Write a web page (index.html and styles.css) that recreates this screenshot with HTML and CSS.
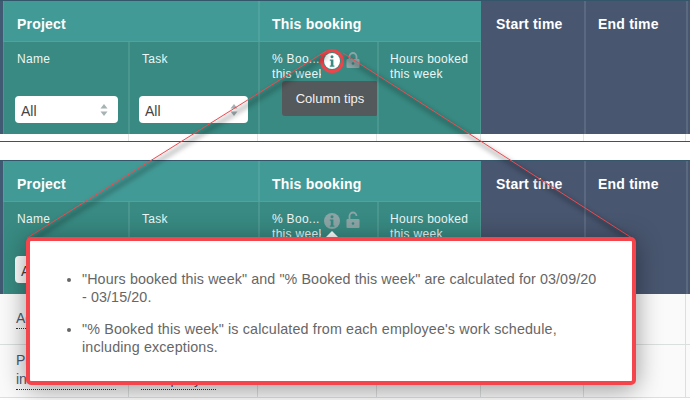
FILE: index.html
```html
<!DOCTYPE html>
<html lang="en">
<head>
    <meta charset="UTF-8">
    <meta name="viewport" content="width=device-width, initial-scale=1.0">
    <title>Column tips</title>
    <link rel="stylesheet" href="styles.css">
</head>
<body>
    <div class="shot shot-top">
        <div class="head">
            <div class="group project">Project</div>
            <div class="group booking">This booking</div>
            <div class="slate start">Start time</div>
            <div class="slate end">End time</div>
            <div class="slate tail"></div>
            <div class="sub sub-name">
                <div class="sub-label">Name</div>
                <div class="select"><span>All</span><svg class="arrows" viewBox="0 0 8 14"><path d="M4 1L7.500 5.500H.5zM4 13L.5 8.500h7z"/></svg></div>
            </div>
            <div class="sub">
                <div class="sub-label">Task</div>
                <div class="select"><span>All</span><svg class="arrows" viewBox="0 0 8 14"><path d="M4 1L7.500 5.500H.5zM4 13L.5 8.500h7z"/></svg></div>
            </div>
            <div class="sub sub-booked">
                <div class="booked-row">
                    <div class="cut-label">% Boo...<br>this week</div>
                    <svg class="icon-info" viewBox="0 0 16 16">
                        <circle class="ring" cx="8" cy="8" r="10.500"/>
                        <circle class="disc-white" cx="8" cy="8" r="8"/>
                        <circle class="dot-teal" cx="8" cy="3.800" r="1.500"/>
                        <path class="dot-teal" d="M5.800 6.500h3.600v6h1v1.300H5.800v-1.300h1v-4.700h-1z"/>
                    </svg>
                    <svg class="icon-lock" viewBox="0 0 14 16">
                        <path class="lock-arc" d="M3.500 8V4.500a3.500 3.500 0 0 1 7 0V8"/>
                        <rect class="lock-body" x="0.500" y="7" width="13" height="9" rx="1"/>
                        <circle class="lock-hole" cx="7" cy="11.500" r="1.300"/>
                    </svg>
                </div>
                <div class="tooltip">Column tips</div>
            </div>
            <div class="sub sub-hours">
                <div class="sub-label">Hours booked<br>this week</div>
            </div>
        </div>
        <div class="spacer-row">
            <div></div><div></div><div></div><div></div><div></div><div></div>
        </div>
    </div>

    <div class="shot shot-bottom">
        <div class="head">
            <div class="group project">Project</div>
            <div class="group booking">This booking</div>
            <div class="slate start">Start time</div>
            <div class="slate end">End time</div>
            <div class="slate tail"></div>
            <div class="sub sub-name">
                <div class="sub-label">Name</div>
                <div class="select"><span>All</span></div>
            </div>
            <div class="sub">
                <div class="sub-label">Task</div>
                <div class="select"><span>All</span></div>
            </div>
            <div class="sub sub-booked">
                <div class="booked-row">
                    <div class="cut-label">% Boo...<br>this week</div>
                    <svg class="icon-info" viewBox="0 0 16 16">
                        <circle class="disc-grey" cx="8" cy="8" r="8"/>
                        <circle class="dot-teal" cx="8" cy="3.800" r="1.500"/>
                        <path class="dot-teal" d="M5.800 6.500h3.600v6h1v1.300H5.800v-1.300h1v-4.700h-1z"/>
                    </svg>
                    <svg class="icon-lock" viewBox="0 0 14 16">
                        <path class="lock-arc" d="M3.500 8V4a3.500 3.500 0 0 1 7 0"/>
                        <rect class="lock-body" x="0.500" y="7" width="13" height="9" rx="1"/>
                        <circle class="lock-hole" cx="7" cy="11.500" r="1.300"/>
                    </svg>
                </div>
                <div class="caret"></div>
            </div>
            <div class="sub sub-hours">
                <div class="sub-label">Hours booked<br>this week</div>
            </div>
        </div>
        <div class="rows">
            <div class="row row-one">
                <div><span class="dotted">Admin</span></div><div></div><div></div><div></div><div></div><div></div>
            </div>
            <div class="row row-two">
                <div><span class="dotted">Project<br>internal work</span></div><div><span class="dotted">Company</span></div><div></div><div></div><div></div><div></div>
            </div>
        </div>
    </div>

    <!-- zoom lines from the icon to the callout -->
    <svg class="zoom-lines" viewBox="0 0 690 400">
        <path class="line-shadow" d="M326 51L27 238M343 53L632 238"/>
        <path class="line-red" d="M326 51L27 238M343 53L632 238"/>
    </svg>

    <div class="callout">
        <ul>
            <li>"Hours booked this week" and "% Booked this week" are calculated for 03/09/20 - 03/15/20.</li>
            <li>"% Booked this week" is calculated from each employee's work schedule, including exceptions.</li>
        </ul>
    </div>
</body>
</html>
```

FILE: styles.css
```css
body {
    margin: 0;
    background-color: #fff;
    font-family: "Liberation Sans", Arial, sans-serif;
    width: 690px;
    height: 400px;
    overflow: hidden;
    position: relative;
}
.shot {
    overflow: hidden;
    background-color: #fff;
}
.shot-top {
    height: 140px;
    border-top: 1px solid #34566a;
    border-bottom: 1px solid #34566a;
    margin-bottom: 18px;
}
.shot-bottom {
    height: 239px;
    border-top: 1px solid #34566a;
    border-bottom: 1px solid #34566a;
}
.head {
    display: grid;
    grid-template-columns: 125px 130px 119px 104px 103px 102px 4px;
    grid-template-rows: 41px 92px;
    background-color: #4a5a72;
    border-left: 3px solid #3f5a72;
    color: #fff;
}
.group, .slate {
    font-size: 14px;
    font-weight: bold;
    letter-spacing: 0.2px;
    line-height: 46px;
    padding-left: 12px;
}
.group {
    background-color: #429a96;
    border-bottom: 1px solid #4ea39f;
    border-left: 2px solid #4ea39f;
    height: 40px;
}
.project {
    grid-column: 1 / 3;
    border-left-width: 1px;
    padding-left: 13px;
}
.booking {
    grid-column: 3 / 5;
}
.slate {
    grid-row: 1 / 3;
    background-color: #48566f;
    border-left: 2px solid #5a6880;
}
.start {
    grid-column: 5;
    border-left: 0;
    padding-left: 15px;
}
.end {
    grid-column: 6;
}
.tail {
    grid-column: 7;
    padding: 0;
}
.sub {
    grid-row: 2;
    position: relative;
    background-color: #388a82;
    border-left: 2px solid #4a9790;
    padding: 10px 0 0 12px;
    font-size: 12px;
    line-height: 15px;
    letter-spacing: 0.3px;
    color: #eef6f5;
}
.sub-name {
    border-left-width: 1px;
    padding-left: 13px;
}
.sub-hours {
    border-right: 1px solid #4a9790;
    padding-left: 11px;
}
.select {
    position: absolute;
    left: 9px;
    right: 10px;
    top: 54px;
    height: 27px;
    background-color: #fff;
    border-radius: 4px;
    font-size: 14px;
    line-height: 31px;
    letter-spacing: 0;
    color: #444;
    padding-left: 6px;
}
.sub-name .select {
    left: 11px;
}
.arrows {
    position: absolute;
    right: 10px;
    top: 7px;
    width: 8px;
    height: 14px;
    fill: #a6b2b4;
}
.booked-row {
    display: flex;
    align-items: flex-start;
}
.cut-label {
    width: 49px;
    overflow: hidden;
    white-space: nowrap;
    flex: none;
}
.icon-info {
    flex: none;
    width: 16px;
    height: 16px;
    margin: 1px 0 0 3px;
    overflow: visible;
}
.ring {
    fill: none;
    stroke: #f0434a;
    stroke-width: 3;
}
.disc-white {
    fill: #fff;
}
.disc-grey {
    fill: #8da5a6;
}
.dot-teal {
    fill: #388a82;
}
.icon-lock {
    flex: none;
    width: 14px;
    height: 16px;
    margin: 0 0 0 6px;
    overflow: visible;
}
.lock-arc {
    fill: none;
    stroke: #8da5a6;
    stroke-width: 1.800;
}
.lock-body {
    fill: #8da5a6;
}
.lock-hole {
    fill: #388a82;
}
.tooltip {
    position: absolute;
    left: 22px;
    top: 39px;
    width: 96px;
    height: 35px;
    border-radius: 3px;
    background-color: #54595b;
    color: #f2f2f2;
    font-size: 13px;
    line-height: 35px;
    letter-spacing: 0;
    text-align: center;
}
.caret {
    position: absolute;
    left: 66px;
    top: 29px;
    border-left: 6px solid transparent;
    border-right: 6px solid transparent;
    border-bottom: 6px solid #fff;
}
.spacer-row, .row {
    display: grid;
    grid-template-columns: 129px 129px 119px 104px 103px 102px 4px;
}
.spacer-row {
    height: 7px;
}
.spacer-row div {
    border-right: 1px solid #e4e6e6;
}
.rows {
    background-color: #fafafa;
}
.row {
    border-bottom: 1px solid #dcdfdf;
    font-size: 14px;
    line-height: 19px;
    color: #4b5a72;
}
.row div {
    border-right: 1px solid #dcdfdf;
    padding-left: 16px;
}
.row-one {
    height: 50px;
}
.row-two {
    height: 52px;
}
.dotted {
    display: inline-block;
    border-bottom: 1px dotted #333;
    margin-top: 15px;
}
.row-two .dotted {
    width: 100px;
    margin-top: 6px;
}
.row-two div:nth-child(2) .dotted {
    width: 75px;
    margin-top: 25px;
    margin-left: -4px;
}
.zoom-lines {
    position: absolute;
    left: 0;
    top: 0;
    width: 690px;
    height: 400px;
}
.line-red {
    fill: none;
    stroke: #f04a50;
    stroke-width: 1;
}
.line-shadow {
    fill: none;
    stroke: rgba(0, 0, 0, 0.35);
    stroke-width: 3;
    transform: translate(2px, 4px);
    filter: blur(2.500px);
}
.callout {
    position: absolute;
    left: 26px;
    top: 237px;
    width: 602px;
    height: 140px;
    border: 4px solid #f4444c;
    border-radius: 5px;
    background-color: #fff;
    box-shadow: 0 4px 26px rgba(0, 0, 0, 0.4);
    color: #666;
    font-size: 14.300px;
    line-height: 18px;
    letter-spacing: 0.1px;
}
.callout ul {
    margin: 29px 0 0;
    padding: 0 33px 0 52px;
}
.callout li {
    margin-bottom: 14px;
}
.callout li + li {
    letter-spacing: 0.15px;
}
```
